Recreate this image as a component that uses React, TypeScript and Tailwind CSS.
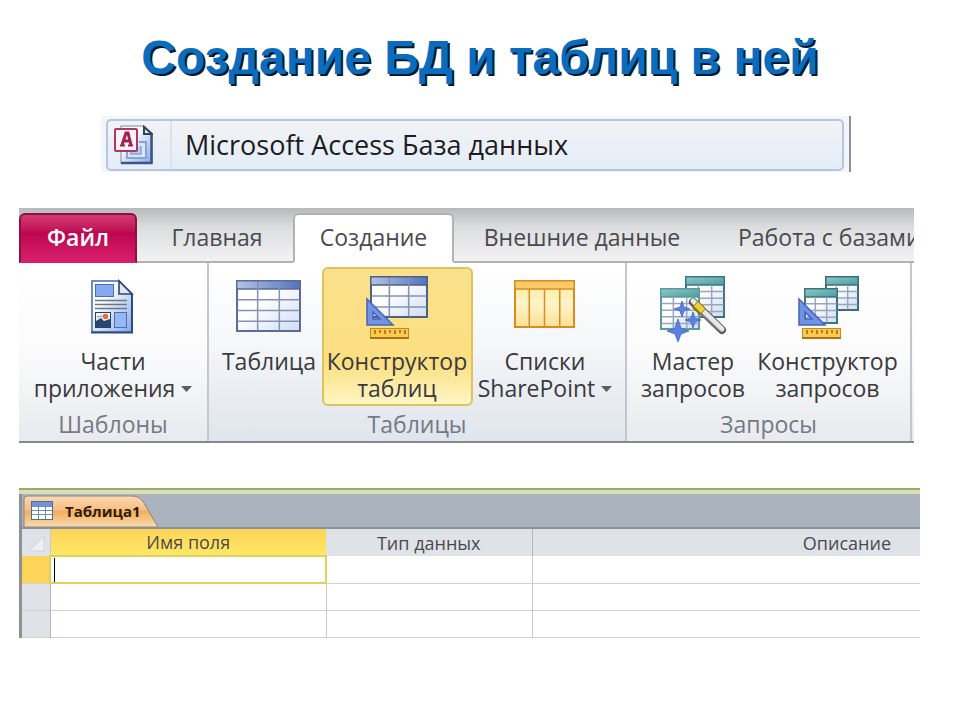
import React from 'react';
import { clsx } from 'clsx';

const Ruler: React.FC<{ x: number; y: number }> = ({ x, y }) => (
  <g>
    <rect x={x + 0.5} y={y + 0.5} width="38" height="10" fill="#fbc94e" stroke="#c58a1c" />
    <rect x={x} y={y + 9} width="39" height="2" fill="#a87414" />
    <path
      d={`M${x + 5} ${y + 2}v4M${x + 10} ${y + 2}v3M${x + 15} ${y + 2}v4M${x + 20} ${y + 2}v3M${x + 25} ${y + 2}v4M${x + 30} ${y + 2}v3M${x + 35} ${y + 2}v4`}
      stroke="#9c6510"
      strokeWidth="1.5"
    />
  </g>
);

const Triangle: React.FC<{ x: number; y: number }> = ({ x, y }) => (
  <path
    d={`M${x} ${y}v26h26z M${x + 6} ${y + 13}v7h7z`}
    fill="#7292e4"
    stroke="#4463bc"
    strokeWidth="1.5"
    fillRule="evenodd"
  />
);

interface GridProps {
  x: number;
  y: number;
  w: number;
  h: number;
  cols: number;
  rows: number;
  head: string;
  line: string;
  edge: string;
  fill: string;
  plainHead?: boolean;
}

const Grid: React.FC<GridProps> = ({ x, y, w, h, cols, rows, head, line, edge, fill, plainHead }) => {
  const headHeight = 9;
  const rowHeight = (h - headHeight) / rows;
  const top = plainHead ? headHeight : 1;
  return (
    <g>
      <rect x={x + 1} y={y + 1} width={w - 2} height={h - 2} fill={fill} stroke={edge} strokeWidth="2" />
      <rect x={x + 1} y={y + 1} width={w - 2} height={headHeight - 1} fill={head} />
      <path d={`M${x} ${y + headHeight}h${w}`} stroke={edge} strokeWidth="1.5" />
      {Array.from({ length: cols - 1 }, (_, i) => (
        <path key={`c${i}`} d={`M${x + (w / cols) * (i + 1)} ${y + top}v${h - top - 1}`} stroke={line} strokeWidth="1.5" />
      ))}
      {Array.from({ length: rows - 1 }, (_, i) => (
        <path key={`r${i}`} d={`M${x + 1} ${y + headHeight + rowHeight * (i + 1)}h${w - 2}`} stroke={line} strokeWidth="1.5" />
      ))}
      <rect x={x + 0.75} y={y + 0.75} width={w - 1.5} height={h - 1.5} fill="none" stroke={edge} strokeWidth="1.5" />
    </g>
  );
};

const Gradients = () => (
  <svg className="absolute size-0" aria-hidden="true">
    <defs>
      <linearGradient id="blueHead" x1="0" y1="0" x2="1" y2="0">
        <stop offset="0" stopColor="#b4c2e4" />
        <stop offset="1" stopColor="#5474c0" />
      </linearGradient>
      <linearGradient id="tealHead" x1="0" y1="0" x2="1" y2="1">
        <stop offset="0" stopColor="#8fcac8" />
        <stop offset="1" stopColor="#4b9b9c" />
      </linearGradient>
      <linearGradient id="paper" x1="0" y1="0" x2="1" y2="1">
        <stop offset="0.4" stopColor="#ffffff" />
        <stop offset="1" stopColor="#cfdcf4" />
      </linearGradient>
      <linearGradient id="page" x1="0" y1="0" x2="1" y2="1">
        <stop offset="0.3" stopColor="#ffffff" />
        <stop offset="1" stopColor="#86a8e4" />
      </linearGradient>
      <linearGradient id="honey" x1="0" y1="0" x2="0" y2="1">
        <stop offset="0" stopColor="#fde9a0" />
        <stop offset="0.5" stopColor="#fff4c8" />
        <stop offset="1" stopColor="#fde094" />
      </linearGradient>
      <linearGradient id="docTab" x1="0" y1="0" x2="0" y2="1">
        <stop offset="0" stopColor="#fcd9b4" />
        <stop offset="0.45" stopColor="#f7bd80" />
        <stop offset="0.5" stopColor="#f5ad5f" />
        <stop offset="1" stopColor="#f8dcae" />
      </linearGradient>
    </defs>
  </svg>
);

const iconClass = 'mb-[2px] size-[72px] shrink-0';

const PartsIcon = () => (
  <svg viewBox="0 0 72 72" className={iconClass} aria-hidden="true">
    <path d="M15 7h27l13 13v38H15z" fill="url(#page)" stroke="#6f8dc0" strokeWidth="2" />
    <path d="M55 20v38.500H14" fill="none" stroke="#2c4c86" strokeWidth="2" />
    <path d="M42 7v13h13z" fill="#dce8fa" stroke="#2f456e" strokeWidth="1.6" />
    <rect x="18.500" y="10.500" width="18" height="12" fill="#86aaf0" stroke="#4a6fb8" />
    <path d="M18 26.500h32M18 30.500h32M18 34.500h32" stroke="#6b7686" strokeWidth="1.5" />
    <rect x="18.500" y="38.500" width="15" height="15" fill="#eef3fb" stroke="#24406c" />
    <path d="M19 53v-6l5-3 3 3 6-2v8z" fill="#2b456e" />
    <path d="M20 43l5-1" stroke="#9db0c8" strokeWidth="1.5" />
    <circle cx="28.500" cy="42.500" r="2.800" fill="#e8693a" />
    <rect x="37.500" y="38.500" width="12" height="15" fill="#98b8f4" stroke="#4a6fb8" />
  </svg>
);

const TableIcon = () => (
  <svg viewBox="0 0 72 72" className={iconClass} aria-hidden="true">
    <Grid x={3} y={6} w={65} h={52} cols={3} rows={4} head="url(#blueHead)" line="#8492b0" edge="#5a6c96" fill="url(#paper)" />
  </svg>
);

const TableDesignIcon = () => (
  <svg viewBox="0 0 72 72" className={iconClass} aria-hidden="true">
    <Grid x={9} y={2} w={58} h={42} cols={3} rows={3} head="url(#blueHead)" line="#8492b0" edge="#4c6084" fill="url(#paper)" />
    <Triangle x={6} y={25} />
    <Ruler x={9} y={54} />
  </svg>
);

const SharePointIcon = () => (
  <svg viewBox="0 0 72 72" className={iconClass} aria-hidden="true">
    <Grid x={5} y={6} w={61} h={48} cols={4} rows={1} head="#fbc968" line="#dc8d1c" edge="#d88c20" fill="url(#honey)" plainHead />
  </svg>
);

const QueryWizardIcon = () => (
  <svg viewBox="0 0 72 72" className={iconClass} aria-hidden="true">
    <Grid x={28} y={2} w={40} h={42} cols={3} rows={5} head="url(#tealHead)" line="#9aa6ba" edge="#3c7484" fill="url(#paper)" plainHead />
    <Grid x={3} y={14} w={40} h={42} cols={3} rows={5} head="url(#tealHead)" line="#9aa6ba" edge="#5a9a9e" fill="url(#paper)" plainHead />
    <path d="M36 28L65 56" stroke="#55575c" strokeWidth="8" strokeLinecap="round" />
    <path d="M36 27L65 55" stroke="#e8e8ea" strokeWidth="5" strokeLinecap="round" />
    <path d="M40 36L64 58" stroke="#85878c" strokeWidth="1.500" />
    <path d="M38 30L46 38" stroke="#8c7410" strokeWidth="9" />
    <path d="M39 30L46 37" stroke="#eccf3e" strokeWidth="6" />
    <g fill="#5a80e4" stroke="#4468c8" strokeWidth="0.800">
      <path d="M25 27l2 6 6 2-6 2-2 6-2-6-6-2 6-2z" />
      <path d="M36 38l2 6 6 2-6 2-2 6-2-6-6-2 6-2z" />
      <path d="M21 45l3 9 8 3-8 3-3 8-3-8-8-3 8-3z" />
    </g>
  </svg>
);

const QueryDesignIcon = () => (
  <svg viewBox="0 0 72 72" className={iconClass} aria-hidden="true">
    <Grid x={33} y={2} w={34} h={35} cols={3} rows={4} head="url(#tealHead)" line="#9aa6ba" edge="#3c6c7c" fill="url(#paper)" plainHead />
    <Grid x={12} y={14} w={34} h={36} cols={3} rows={4} head="url(#tealHead)" line="#9aa6ba" edge="#3c7480" fill="url(#paper)" plainHead />
    <Triangle x={7} y={25} />
    <Ruler x={10} y={54} />
  </svg>
);

const AccessIcon = () => (
  <svg viewBox="0 0 40 40" className="size-10 shrink-0" aria-hidden="true">
    <path d="M8 1h23l8 8v29H8z" fill="url(#page)" stroke="#a3aec4" strokeWidth="1.500" />
    <path d="M38.500 9v29H8" fill="none" stroke="#3c5486" strokeWidth="2.500" />
    <path d="M31 2v7h8z" fill="#eef3fc" stroke="#33415f" strokeWidth="2" />
    <path d="M14 27v6h19V17h-7" fill="#dbe6fa" stroke="#86a2d8" strokeWidth="2" />
    <path d="M18 25v4h10v-8" fill="#b5caf2" stroke="#86a2d8" strokeWidth="1.500" />
    <rect x="2" y="4" width="22" height="22" rx="1" fill="#fdf3f6" stroke="#a93a64" strokeWidth="2" />
    <path d="M9 20l4-12h2l3 12M10 16h7" fill="none" stroke="#a3204f" strokeWidth="3" />
    <path d="M7 20.500h5M15 20.500h5" stroke="#a3204f" strokeWidth="2" />
  </svg>
);

const SmallTableIcon = () => (
  <svg viewBox="0 0 22 20" className="h-5 w-[22px] shrink-0" aria-hidden="true">
    <rect x="0.500" y="0.500" width="21" height="18" fill="#ffffff" stroke="#4b6ca8" />
    <rect x="1" y="1" width="20" height="4" fill="#6f92d4" />
    <path d="M7.500 1v17M14.500 1v17M1 5.500h20M1 9.500h20M1 13.500h20" stroke="#6f8cc0" />
  </svg>
);

const DropArrow = () => (
  <svg viewBox="0 0 11 6" className="h-[6px] w-[11px]" aria-hidden="true">
    <path d="M0 0h11L5.500 6z" fill="#5a5f66" />
  </svg>
);

interface RibbonItem {
  lines: string[];
  icon: React.ReactNode;
  width: string;
  active?: boolean;
  menu?: boolean;
}

interface RibbonGroupProps {
  title: string;
  items: RibbonItem[];
  className?: string;
}

const RibbonGroup: React.FC<RibbonGroupProps> = ({ title, items, className }) => (
  <section className={clsx('flex flex-col border-r-2 border-[#c3c6cb] pt-1 pb-[3px]', className)}>
    <div className="flex justify-center">
      {items.map((item) => (
        <button
          key={item.lines.join(' ')}
          type="button"
          className={clsx(
            'flex h-[139px] flex-col items-center rounded-md border-2 pt-[5px] text-[23px] leading-[27px] whitespace-nowrap text-[#3a3a3e]',
            item.width,
            item.active
              ? 'border-[#dcc35c] bg-linear-to-b from-[#fae08c] via-[#fcdf80] via-70% to-[#fff6c4]'
              : 'border-transparent'
          )}
        >
          {item.icon}
          {item.lines.map((line, i) => (
            <span key={line} className="flex items-center gap-[6px]">
              {line}
              {item.menu && i === item.lines.length - 1 && <DropArrow />}
            </span>
          ))}
        </button>
      ))}
    </div>
    <h2 className="pt-[5px] text-center text-[23px] leading-[27px] text-[#747985]">{title}</h2>
  </section>
);

const tabClass = 'flex shrink-0 items-center justify-center border-b-2 whitespace-nowrap text-[23px] leading-[27px]';

const Ribbon = () => (
  <div className="mt-9 mr-[46px] ml-[19px] overflow-hidden font-['Open_Sans','Noto_Sans',sans-serif]">
    <nav className="flex h-[55px] overflow-hidden bg-linear-to-b from-[#b7b9bb] via-[#dcdddf] via-35% to-[#f4f4f5] pt-[5px]">
      <button
        type="button"
        className={clsx(
          tabClass,
          'w-[118px] rounded-t-md border-2 border-[#8c1145] border-b-[#d81f6c] bg-linear-to-b from-[#d43872] via-[#bd0450] via-40% to-[#d81f6c] pb-[2px] font-semibold text-white'
        )}
      >
        Файл
      </button>
      <button type="button" className={clsx(tabClass, 'w-[156px] border-[#b0b2b5] pl-1 text-[#4a4a4e]')}>
        Главная
      </button>
      <button
        type="button"
        className={clsx(tabClass, 'w-[161px] rounded-t-md border-2 border-[#b0b2b5] border-b-white bg-white pb-[2px] text-[#4a4a4e]')}
      >
        Создание
      </button>
      <button type="button" className={clsx(tabClass, 'w-[256px] border-[#b0b2b5] text-[#4a4a4e]')}>
        Внешние данные
      </button>
      <div className="flex min-w-0 grow overflow-hidden border-b-2 border-[#b0b2b5]">
        <button type="button" className="shrink-0 pl-7 text-[23px] leading-[27px] whitespace-nowrap text-[#4a4a4e]">
          Работа с базами
        </button>
      </div>
    </nav>
    <div className="grid grid-cols-[190fr_418fr_285fr_2fr] border-b-2 border-[#85888d] bg-linear-to-b from-white via-[#fbfbfc] via-50% to-[#e8eaed]">
      <RibbonGroup
        title="Шаблоны"
        items={[{ lines: ['Части', 'приложения'], icon: <PartsIcon />, width: 'w-[180px]', menu: true }]}
      />
      <RibbonGroup
        title="Таблицы"
        className="bg-linear-to-b from-white via-[#f7f8fa] via-40% to-[#dfe5ec]"
        items={[
          { lines: ['Таблица'], icon: <TableIcon />, width: 'w-[105px]' },
          { lines: ['Конструктор', 'таблиц'], icon: <TableDesignIcon />, width: 'w-[151px]', active: true },
          { lines: ['Списки', 'SharePoint'], icon: <SharePointIcon />, width: 'w-[145px]', menu: true },
        ]}
      />
      <RibbonGroup
        title="Запросы"
        items={[
          { lines: ['Мастер', 'запросов'], icon: <QueryWizardIcon />, width: 'w-[118px]' },
          { lines: ['Конструктор', 'запросов'], icon: <QueryDesignIcon />, width: 'w-[151px]' },
        ]}
      />
    </div>
  </div>
);

const DesignView = () => (
  <div className="mt-[45px] mr-10 ml-[19px] font-['Open_Sans','Noto_Sans',sans-serif]">
    <div className="h-[6px] border-t-2 border-[#9aa870] bg-[#dbdfb6]" />
    <div className="border-l-[3px] border-[#8c9198]">
      <div className="flex h-[35px] items-end border-b-2 border-[#8c9198] bg-[#abb3be]">
        <button type="button" className="relative flex h-[33px] w-[138px] items-center gap-3 pl-[9px] text-[15px] leading-5 font-bold text-[#2e1c0c]">
          <svg viewBox="0 0 138 33" className="absolute inset-0 size-full" aria-hidden="true">
            <path d="M2 33V5q0-3 3-3h105q8 0 12 7l14 24z" fill="url(#docTab)" stroke="#8f8478" strokeWidth="1" />
          </svg>
          <span className="relative">
            <SmallTableIcon />
          </span>
          <span className="relative">Таблица1</span>
        </button>
      </div>
      <table className="w-full table-fixed border-collapse text-lg leading-6 text-[#4a4a4e]">
        <colgroup>
          <col className="w-[28px]" />
          <col className="w-[276px]" />
          <col className="w-[206px]" />
          <col />
        </colgroup>
        <thead>
          <tr className="h-[27px] bg-[#dfe2e7]">
            <td className="border-r border-[#c6cad0] p-0">
              <svg viewBox="0 0 28 26" className="h-[26px] w-[28px]" aria-hidden="true">
                <path d="M22 6v15H7z" fill="#eef0f3" stroke="#d0d3d8" />
              </svg>
            </td>
            <th scope="col" className="bg-linear-to-b from-[#fdd457] to-[#ffe766] p-0 text-center font-normal">Имя поля</th>
            <th scope="col" className="border-r border-[#b4b9c0] p-0 text-center font-normal">Тип данных</th>
            <th scope="col" className="p-0 pr-[29px] text-right font-normal">Описание</th>
          </tr>
        </thead>
        <tbody>
          <tr className="h-[27px] border-b border-[#cfd1d4]">
            <td className="bg-[#fdd457] p-0" />
            <td className="border-2 border-[#e0d060] p-0">
              <div className="flex h-6 pl-[3px]">
                <span className="w-px bg-black" />
                <input type="text" aria-label="Имя поля" className="min-w-0 grow outline-none" />
              </div>
            </td>
            <td className="border-r border-[#c8cacd] p-0" />
            <td className="p-0" />
          </tr>
          {[0, 1].map((row) => (
            <tr key={row} className="h-[27px] border-b border-[#cfd1d4]">
              <td className="border-r border-[#b4b9c0] bg-[#dfe2e7] p-0" />
              <td className="border-r border-[#c8cacd] p-0" />
              <td className="border-r border-[#c8cacd] p-0" />
              <td className="p-0" />
            </tr>
          ))}
        </tbody>
      </table>
    </div>
  </div>
);

export default function App() {
  return (
    <main className="min-h-screen bg-white">
      <Gradients />
      <h1 className="pt-7 text-center font-['Liberation_Sans',Arial,sans-serif] text-5xl leading-[60px] font-bold text-[#0a6cbf] [text-shadow:2px_2px_0_#06182c]">
        Создание БД и таблиц в ней
      </h1>
      <div className="mt-7 mr-[109px] ml-[101px] border-r-2 border-[#909296] bg-[#f2f6fc] pt-[3px] pr-[5px] pb-px pl-[5px]">
        <button
          type="button"
          className="flex h-[52px] w-full items-center rounded-[5px] border-2 border-[#b4c6e4] bg-linear-to-b from-[#f2f3f5] to-[#e4edf8] font-['Open_Sans','Noto_Sans',sans-serif] text-[27px] leading-8 text-[#1c1c20]"
        >
          <span className="flex h-full items-center border-r-2 border-[#d8e2f0] pr-[17px] pl-[5px]">
            <AccessIcon />
          </span>
          <span className="pl-[13px]">Microsoft Access База данных</span>
        </button>
      </div>
      <Ribbon />
      <DesignView />
    </main>
  );
}
